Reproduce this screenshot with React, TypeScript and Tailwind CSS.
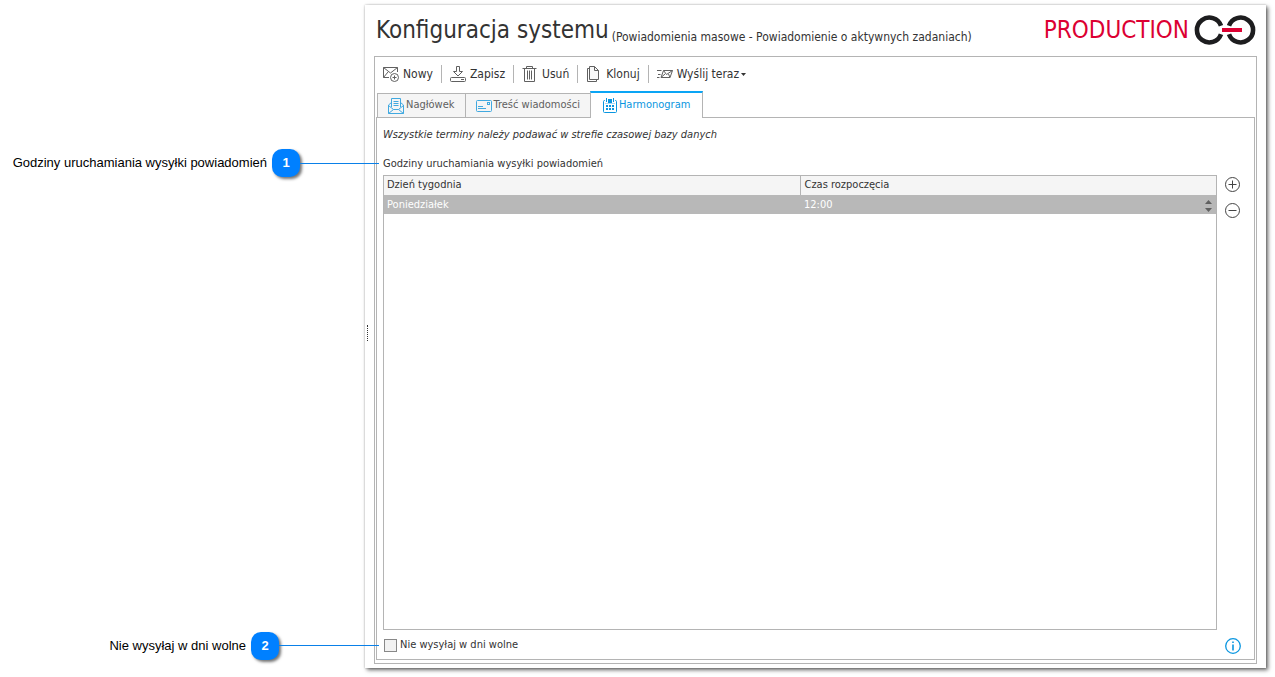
import React from 'react';

type IconProps = { className?: string };

function MailPlusIcon({ className = 'h-4 w-4' }: IconProps) {
  return (
    <svg viewBox="0 0 16 16" className={className} fill="none" stroke="currentColor" strokeWidth="1">
      <path d="M6 11.5H.5V1.5H14.5V6" />
      <path d="M.5 1.5L7.5 7L14.5 1.5M.5 11.5L5 6" />
      <circle cx="11.5" cy="11.5" r="4" />
      <path d="M11.5 9.5V13.5M9.5 11.5H13.5" />
    </svg>
  );
}

function SaveIcon({ className = 'h-4 w-4' }: IconProps) {
  return (
    <svg viewBox="0 0 16 16" className={className} fill="none" stroke="currentColor" strokeWidth="1">
      <path d="M6.5 .5H9.5V5.5H12.5L8 10L3.5 5.5H6.5Z" />
      <rect x=".5" y="11.5" width="15" height="4" rx="1" />
      <path d="M11 13.5H14" />
    </svg>
  );
}

function TrashIcon({ className = 'h-4 w-4' }: IconProps) {
  return (
    <svg viewBox="0 0 16 16" className={className} fill="none" stroke="currentColor" strokeWidth="1">
      <path d="M.5 2.5H14.5M4.5 2V.5H10.5V2M2.5 2.5V15.5H12.5V2.5" />
      <path d="M5.5 4.5V13.5M7.5 4.5V13.5M9.5 4.5V13.5" />
    </svg>
  );
}

function CopyIcon({ className = 'h-4 w-4' }: IconProps) {
  return (
    <svg viewBox="0 0 16 16" className={className} fill="none" stroke="currentColor" strokeWidth="1">
      <path d="M3.5 .5H8.5L12.5 4.5V13.5H3.5Z" fill="#f7f7f7" />
      <path d="M8.5 .5V4.5H12.5M3.5 2.5H1.5V15.5H10.5V13.5" />
    </svg>
  );
}

function SendIcon({ className = 'h-4 w-4' }: IconProps) {
  return (
    <svg viewBox="0 0 16 16" className={className} fill="none" stroke="currentColor" strokeWidth="1">
      <path d="M6.5 4.5H15.5L13 11.5H4Z" />
      <path d="M6.5 4.5L9.5 8.5L15.5 4.5M4 11.5L8 8M13 11.5L11.5 8" />
      <path d="M0 4.5H4.5M1 8.5H3.5M0 11.5H2.5" />
    </svg>
  );
}

function OpenMailIcon({ className = 'h-4 w-4' }: IconProps) {
  return (
    <svg viewBox="0 0 16 16" className={className} fill="none" stroke="currentColor" strokeWidth="1">
      <path d="M3.5 9V.5H12.5V9" />
      <path d="M5.5 3.5H10.5M5.5 5.5H10.5M5.5 7.5H10.5" />
      <path d="M3.5 4.5L.5 7V15.5H15.5V7L12.5 4.5" />
      <path d="M.5 7.5L5.5 11.5H10.5L15.5 7.5M.5 15.5L5.5 11.5M15.5 15.5L10.5 11.5" />
    </svg>
  );
}

function LetterIcon({ className = 'h-4 w-4' }: IconProps) {
  return (
    <svg viewBox="0 0 16 16" className={className} fill="none" stroke="currentColor" strokeWidth="1">
      <rect x=".5" y="2.5" width="15" height="11" rx="1" />
      <rect x="11.5" y="4.5" width="2" height="2" />
      <path d="M2 8.5H7M2 10.5H10" />
    </svg>
  );
}

function CalendarIcon({ className = 'h-4 w-4' }: IconProps) {
  return (
    <svg viewBox="0 0 16 16" className={className} fill="none" stroke="currentColor" strokeWidth="1">
      <path d="M2 2.5H1.5Q.5 2.5 .5 3.5V13.5Q.5 14.5 1.5 14.5H12.5Q13.5 14.5 13.5 13.5V3.5Q13.5 2.5 12.5 2.5H12" />
      <path d="M3.5 0V4M10.5 0V4" />
      <path d="M5 3H9" strokeWidth="4" />
      <path d="M2 5.5H12" strokeOpacity="0.35" />
      <path d="M3 8H11M3 11H11" strokeWidth="2" strokeDasharray="2 1" />
    </svg>
  );
}

function ChainLogo() {
  return (
    <svg viewBox="0 0 64 32" className="h-8 w-16 shrink-0" fill="none" stroke="#1d1d1f" strokeWidth="4.6">
      <path d="M28 11.8A12.4 12.4 0 1 0 28 20.2" />
      <path d="M36 11.8A12.4 12.4 0 1 1 36 20.2" />
      <path d="M29 16H49" stroke="#dc0032" strokeWidth="4" />
    </svg>
  );
}

function Callout({ label, number, lineClass }: { label: string; number: number; lineClass: string }) {
  return (
    <div className="absolute top-1/2 right-full mr-1 flex -translate-y-1/2 items-center whitespace-nowrap text-black">
      <span className="mr-[5px] font-['Liberation_Sans',sans-serif] text-[13px]">{label}</span>
      <span className="flex size-7 items-center justify-center rounded-[10px] bg-[#0080ff] font-['Liberation_Sans',sans-serif] text-[13px] font-bold text-white shadow-[2px_2px_3px_rgba(0,0,0,0.55)]">
        {number}
      </span>
      <span className={`h-px bg-[#0a80e8] ${lineClass}`} />
    </div>
  );
}

const actions = [
  { label: 'Nowy', icon: <MailPlusIcon /> },
  { label: 'Zapisz', icon: <SaveIcon /> },
  { label: 'Usuń', icon: <TrashIcon /> },
  { label: 'Klonuj', icon: <CopyIcon /> },
  { label: 'Wyślij teraz', icon: <SendIcon />, menu: true },
];

function Toolbar() {
  return (
    <div className="flex h-[34px] items-center pl-[7px] text-[12px]">
      {actions.map((action, i) => (
        <React.Fragment key={action.label}>
          {i > 0 && <span className="mx-2 h-[18px] w-px bg-[#b4b4b4]" />}
          <button type="button" className="flex items-center gap-1 whitespace-nowrap">
            <span className="text-[#606060]">{action.icon}</span>
            {action.label}
            {action.menu && (
              <svg viewBox="0 0 5 3" className="-ml-0.5 h-[3px] w-[5px]">
                <path d="M0 0H5L2.5 3Z" fill="#333" />
              </svg>
            )}
          </button>
        </React.Fragment>
      ))}
    </div>
  );
}

function Tabs() {
  const idle = 'flex h-6 items-center gap-0.5 border border-b-0 border-[#b4b4b4] bg-[#f5f5f5] px-2.5 text-[#606060]';
  return (
    <div role="tablist" className="flex h-[26px] items-end pl-px whitespace-nowrap">
      <button type="button" role="tab" aria-selected="false" className={idle}>
        <span className="text-[#41a9e0]"><OpenMailIcon /></span>
        Nagłówek
      </button>
      <button type="button" role="tab" aria-selected="false" className={`${idle} -ml-px`}>
        <span className="text-[#41a9e0]"><LetterIcon /></span>
        Treść wiadomości
      </button>
      <button
        type="button"
        role="tab"
        aria-selected="true"
        className="relative -mb-px -ml-px flex h-[27px] items-center border-x border-t-2 border-x-[#b4b4b4] border-t-[#0aa5f5] bg-white px-3 text-[#0a96e0]"
      >
        <CalendarIcon />
        Harmonogram
      </button>
    </div>
  );
}

function Schedule() {
  return (
    <div className="flex flex-1 gap-2">
      <div className="flex-1 border border-[#b4b4b4]">
        <table aria-labelledby="hours-label" className="w-full table-fixed border-collapse text-left">
          <thead>
            <tr className="h-[19px] bg-[#f5f5f5]">
              <th className="w-1/2 border-r border-[#b4b4b4] px-[3px] font-normal">Dzień tygodnia</th>
              <th className="px-1 font-normal">Czas rozpoczęcia</th>
            </tr>
          </thead>
          <tbody>
            <tr className="h-[19px] bg-[#b8b8b8] text-white">
              <td className="px-[3px] pt-0.5">Poniedziałek</td>
              <td className="px-1 pt-0.5">
                <div className="flex items-center justify-between">
                  12:00
                  <span className="flex flex-col gap-1 text-[#606060]">
                    <button type="button" aria-label="Później">
                      <svg viewBox="0 0 7 4" className="block h-1 w-[7px]"><path d="M0 4L3.5 0L7 4Z" fill="currentColor" /></svg>
                    </button>
                    <button type="button" aria-label="Wcześniej">
                      <svg viewBox="0 0 7 4" className="block h-1 w-[7px]"><path d="M0 0L3.5 4L7 0Z" fill="currentColor" /></svg>
                    </button>
                  </span>
                </div>
              </td>
            </tr>
          </tbody>
        </table>
      </div>
      <div className="flex w-4 flex-col gap-2.5 pt-0.5 text-[#444]">
        <button type="button" aria-label="Dodaj">
          <svg viewBox="0 0 16 16" className="block size-4" fill="none" stroke="currentColor">
            <circle cx="7.5" cy="7.5" r="7" />
            <path d="M7.5 3.5V11.5M3.5 7.5H11.5" />
          </svg>
        </button>
        <button type="button" aria-label="Usuń wiersz">
          <svg viewBox="0 0 16 16" className="block size-4" fill="none" stroke="currentColor">
            <circle cx="7.5" cy="7.5" r="7" />
            <path d="M3.5 7.5H11.5" />
          </svg>
        </button>
      </div>
    </div>
  );
}

export default function App() {
  return (
    <div className="flex min-h-screen bg-white pt-[5px] pr-[9px] pb-[9px] pl-[365px] font-['DejaVu_Sans_Condensed','DejaVu_Sans',sans-serif] text-[11px] text-[#333]">
      <main className="flex flex-1 bg-white pr-[9px] pb-1 shadow-[2px_2px_4px_rgba(0,0,0,0.6),0_0_2px_rgba(0,0,0,0.25)]">
        <div className="flex w-[9px] shrink-0 items-center pb-1 pl-0.5">
          <span className="h-4 border-l border-dotted border-[#333]" />
        </div>

        <div className="flex flex-1 flex-col">
          <header className="flex h-[51px] items-center justify-between pb-0.5 pl-0.5 whitespace-nowrap">
            <div className="flex items-end gap-[3px]">
              <h1 className="text-[24px] leading-8">Konfiguracja systemu</h1>
              <span className="text-[12px] leading-[18px]">(Powiadomienia masowe - Powiadomienie o aktywnych zadaniach)</span>
            </div>
            <div className="flex items-center gap-1 text-[24px] text-[#dc0032]">
              PRODUCTION
              <ChainLogo />
            </div>
          </header>

          <section className="flex flex-1 flex-col border border-[#b4b4b4] pr-px pb-[3px] pl-px">
            <Toolbar />
            <Tabs />
            <div className="flex flex-1 flex-col border border-[#b4b4b4] pr-[13px] pl-1.5">
              <p className="mt-2 h-4 leading-[18px] italic">Wszystkie terminy należy podawać w strefie czasowej bazy danych</p>
              <div className="relative mt-[13px] mb-1 h-4">
                <h2 id="hours-label" className="leading-[18px]">Godziny uruchamiania wysyłki powiadomień</h2>
                <Callout label="Godziny uruchamiania wysyłki powiadomień" number={1} lineClass="w-[79px]" />
              </div>
              <Schedule />
              <div className="flex h-[29px] items-center justify-between pt-0.5">
                <div className="relative">
                  <label className="flex items-center gap-[3px] pl-px">
                    <input
                      type="checkbox"
                      className="size-[13px] appearance-none border border-[#888] bg-[#f2f2f2] checked:bg-[#0a96e0]"
                    />
                    Nie wysyłaj w dni wolne
                  </label>
                  <Callout label="Nie wysyłaj w dni wolne" number={2} lineClass="w-[100px]" />
                </div>
                <button type="button" aria-label="Informacje" className="text-[#0a96e0]">
                  <svg viewBox="0 0 16 16" className="block size-4" fill="none" stroke="currentColor">
                    <circle cx="8" cy="8" r="7.3" strokeWidth="1.3" />
                    <path d="M8 6.5V12.5M8 3.5V5" strokeWidth="1.6" />
                  </svg>
                </button>
              </div>
            </div>
          </section>
        </div>
      </main>
    </div>
  );
}
